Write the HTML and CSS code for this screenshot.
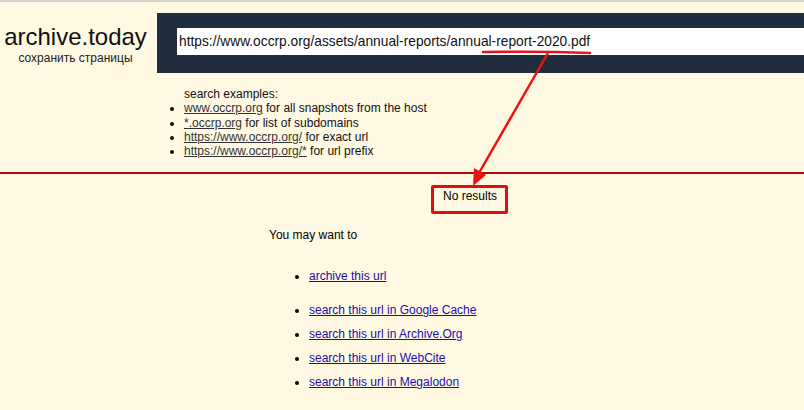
FILE: index.html
```html
<!DOCTYPE html>
<html>
<head>
    <title>archive.today</title>
    <link rel="stylesheet" href="styles.css">
</head>
<body>
    <div class="header">
        <div class="logo">
            <div class="logo-title">archive.today</div>
            <div class="logo-sub">сохранить страницы</div>
        </div>
        <div class="search-bar">
            <div class="search-input">https://www.occrp.org/assets/annual-reports/annual-report-2020.pdf</div>
        </div>
    </div>

    <div class="examples">
        <div>search examples:</div>
        <ul>
            <li><a href="#">www.occrp.org</a> for all snapshots from the host</li>
            <li><a href="#">*.occrp.org</a> for list of subdomains</li>
            <li><a href="#">https://www.occrp.org/</a> for exact url</li>
            <li><a href="#">https://www.occrp.org/*</a> for url prefix</li>
        </ul>
    </div>

    <div class="divider"></div>

    <div class="results">
        <div class="no-results"><span class="mark-box">No results</span></div>
        <div class="want">You may want to</div>
        <ul class="actions archive">
            <li><a href="#">archive this url</a></li>
        </ul>
        <ul class="actions">
            <li><a href="#">search this url in Google Cache</a></li>
            <li><a href="#">search this url in Archive.Org</a></li>
            <li><a href="#">search this url in WebCite</a></li>
            <li><a href="#">search this url in Megalodon</a></li>
        </ul>
    </div>

    <!-- red annotation drawn over the screenshot -->
    <svg class="annotation" width="804" height="410" viewBox="0 0 804 410">
        <path d="M483 52 Q540 51 590 53" stroke="#e8141b" stroke-width="2.5" fill="none" stroke-linecap="round"/>
        <line x1="548" y1="53" x2="479" y2="173" stroke="#f01010" stroke-width="2.5"/>
        <polygon points="473,186 474,168 486,175" fill="#f01010"/>
    </svg>
</body>
</html>
```

FILE: styles.css
```css
body {
    margin: 0;
    background: #fff9e3;
    font-family: Arial, "Liberation Sans", sans-serif;
    font-size: 12px;
    color: #000;
    border-top: 2px solid #d4d2cc;
    position: relative;
    height: 408px;
    overflow: hidden;
}

.header {
    display: flex;
    margin-top: 11px;
    height: 60px;
}

.logo {
    width: 154px;
    display: flex;
    flex-direction: column;
    align-items: center;
    padding: 10px 3px 0 0;
    box-sizing: border-box;
}

.logo-title {
    font-size: 24px;
    line-height: 28px;
    color: #111;
}

.logo-sub {
    font-size: 12px;
    line-height: 14px;
    color: #222;
}

.search-bar {
    flex: 1;
    margin-left: 3px;
    background: #1f2d3e;
    padding: 15px 0 18px 20px;
}

.search-input {
    background: #fff;
    height: 27px;
    line-height: 27px;
    padding-left: 2px;
    font-size: 13.75px;
    color: #111;
}

.examples {
    padding: 14px 0 0 184px;
    line-height: 14.3px;
    color: #111;
}

.examples ul {
    margin: 0;
    padding: 0;
}

.examples li {
    list-style: disc;
}

.examples a {
    color: #333;
}

.divider {
    margin-top: 14px;
    border-top: 2px solid #a80c10;
}

.results {
    padding-left: 269px;
}

.no-results {
    margin: 11px 0 0 162px;
}

.mark-box {
    display: inline-block;
    border: 3px solid #e20d0d;
    border-radius: 2px;
    padding: 1px 8px 8px 9px;
    line-height: 14px;
}

.want {
    margin-top: 14px;
    line-height: 14px;
}

.actions {
    margin: 0;
    padding-left: 40px;
    line-height: 14px;
}

.actions.archive {
    margin-top: 27px;
    margin-bottom: 20px;
}

.actions li {
    margin-bottom: 10px;
}

.actions a {
    color: #1a0dab;
}

.annotation {
    position: absolute;
    top: -2px;
    left: 0;
}
```
